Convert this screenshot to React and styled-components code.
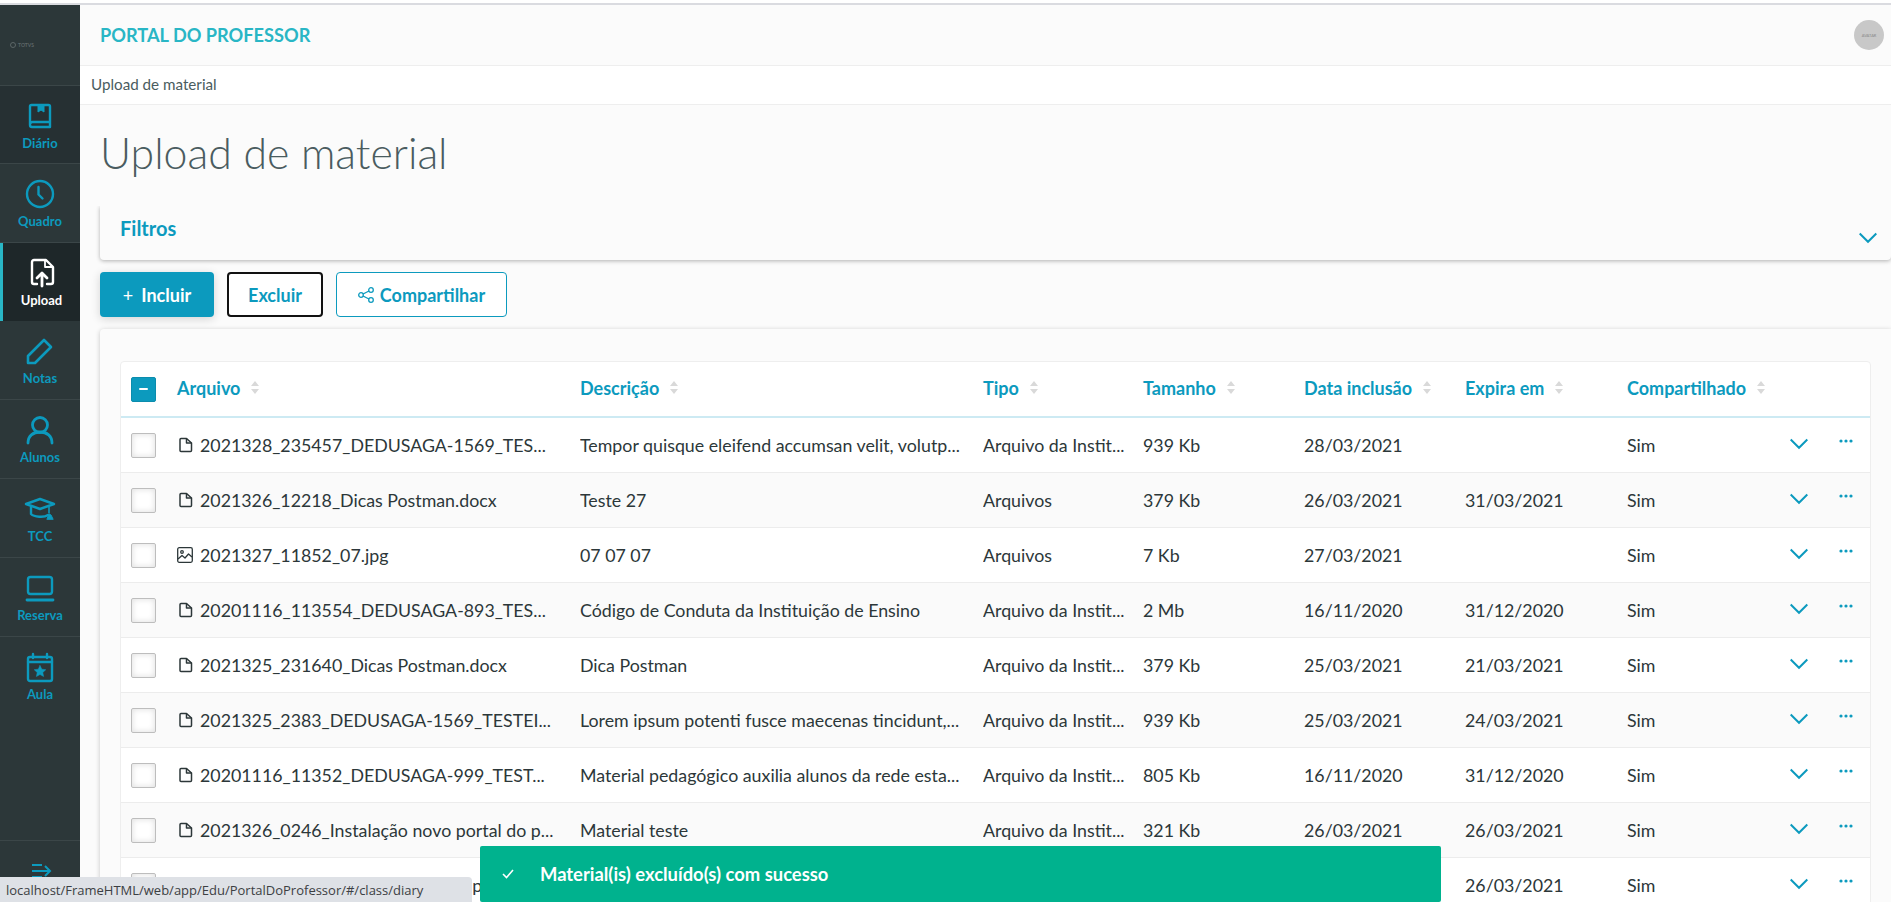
import React from "react";
import styled, { createGlobalStyle } from "styled-components";

const FONT = `"Lato", "Open Sans", sans-serif`;
const TEAL = "#0c9abe";

const GlobalStyle = createGlobalStyle`
  html, body {
    margin: 0;
    height: 100%;
    overflow: hidden;
    background: #fbfbfb;
    font-family: ${FONT};
  }
  * { box-sizing: border-box; }
`;

const Page = styled.div`
  height: 902px;
  display: flex;
  flex-direction: column;
  overflow: hidden;
`;

const TopEdge = styled.div`
  height: 5px;
  flex: none;
  background: #fff;
  border-bottom: 2px solid #dadbe0;
`;

const Shell = styled.div`
  flex: 1;
  min-height: 0;
  display: flex;
`;

const Sidebar = styled.nav`
  width: 80px;
  flex: none;
  background: #2c3739;
  display: flex;
  flex-direction: column;
`;

const LogoBox = styled.div`
  height: 81px;
  flex: none;
  padding: 0 0 0 10px;
  display: flex;
  align-items: center;
  gap: 2px;
  color: #5d6668;
  font-size: 5px;
  font-weight: 700;
  border-bottom: 1px solid #3b4648;
`;

const NavItem = styled.div`
  height: ${(p) => (p.$short ? 78 : 79)}px;
  flex: none;
  display: flex;
  flex-direction: column;
  align-items: center;
  justify-content: flex-start;
  padding-top: 14px;
  gap: 3px;
  font-size: 13px;
  font-weight: 700;
  color: ${(p) => (p.$active ? "#fff" : TEAL)};
  background: ${(p) => (p.$active ? "#1e2729" : p.$dark ? "#263033" : "transparent")};
  border-left: ${(p) => (p.$active ? "3px solid #29b6c5" : "0")};
  border-bottom: ${(p) => (p.$active || p.$last ? "0" : "1px solid #3b4648")};
`;

const NavIcon = styled.svg`
  width: 32px;
  height: 32px;
  fill: none;
  stroke: currentColor;
  stroke-width: 2.4;
  stroke-linecap: round;
  stroke-linejoin: round;
`;

const SidebarSpacer = styled.div`
  flex: 1;
  border-bottom: 1px solid #3b4648;
`;

const SidebarFoot = styled.div`
  height: 61px;
  flex: none;
  padding: 22px 0 0 32px;
  color: ${TEAL};
`;

const Main = styled.main`
  flex: 1;
  min-width: 0;
  display: flex;
  flex-direction: column;
`;

const Header = styled.header`
  height: 60px;
  flex: none;
  display: flex;
  align-items: center;
  justify-content: space-between;
  padding: 0 7px 0 20px;
  background: #fbfbfb;
`;

const PortalTitle = styled.div`
  font-size: 18.2px;
  font-weight: 700;
  color: #29b6c5;
  text-transform: uppercase;
`;

const Avatar = styled.div`
  width: 30px;
  height: 30px;
  border-radius: 50%;
  background: #c8c8c8;
  color: #8a8a8a;
  font-size: 4px;
  display: flex;
  align-items: center;
  justify-content: center;
`;

const Breadcrumb = styled.div`
  height: 40px;
  flex: none;
  padding: 0 0 2px 11px;
  display: flex;
  align-items: center;
  background: #fff;
  border-top: 1px solid #eee;
  border-bottom: 1px solid #eee;
  font-size: 15.2px;
  color: #4a5c60;
`;

const Content = styled.div`
  flex: 1;
  min-height: 0;
  padding-left: 20px;
  display: flex;
  flex-direction: column;
`;

const PageTitle = styled.h1`
  margin: 0;
  height: 101px;
  padding: 20px 0 0 0;
  font-size: 42.8px;
  line-height: 56px;
  font-weight: 300;
  color: #4a5c60;
`;

const FilterCard = styled.section`
  height: 54px;
  flex: none;
  position: relative;
  display: flex;
  padding: 10px 20px 0;
  font-size: 20px;
  font-weight: 700;
  color: ${TEAL};
  background: #fbfbfb;
  border-radius: 0 0 4px 4px;
  box-shadow: 0 1px 4px rgba(0, 0, 0, 0.3);
  clip-path: inset(0 -8px -8px -8px);
`;

const FilterChevron = styled.span`
  position: absolute;
  right: 14px;
  bottom: 13px;
  display: flex;
`;

const Toolbar = styled.div`
  height: 45px;
  flex: none;
  margin: 12px 0;
  display: flex;
  gap: 13px;
`;

const Button = styled.button`
  height: 45px;
  width: ${(p) => p.$width}px;
  padding: 0;
  display: flex;
  align-items: center;
  justify-content: center;
  gap: 6px;
  font-family: ${FONT};
  font-size: 18px;
  font-weight: 700;
  border-radius: 4px;
  color: ${(p) => (p.$primary ? "#fff" : TEAL)};
  background: ${(p) => (p.$primary ? TEAL : "#fff")};
  border: ${(p) =>
    p.$primary ? "0" : p.$focus ? "2px solid #111" : `1px solid ${TEAL}`};
  box-shadow: ${(p) => (p.$primary ? "0 2px 10px rgba(0,0,0,.16)" : "none")};
`;

const PlusMark = styled.span`
  font-weight: 400;
  margin-right: 2px;
`;

const TableCard = styled.section`
  flex: 1;
  min-height: 0;
  padding: 32px 20px 0;
  background: #fbfbfb;
  border-radius: 4px 0 0 0;
  box-shadow: 0 1px 5px rgba(0, 0, 0, 0.22);
  overflow: hidden;
`;

const Table = styled.div`
  background: #fff;
  border: 1px solid #eee;
  border-radius: 4px 4px 0 0;
`;

const COLUMNS = "56px 403px 403px 160px 161px 161px 162px 163px 49px 1fr";

const HeadRow = styled.div`
  height: 56px;
  display: grid;
  grid-template-columns: ${COLUMNS};
  align-items: center;
  border-bottom: 2px solid #cdeaf3;
`;

const Row = styled.div`
  height: 55px;
  display: grid;
  grid-template-columns: ${COLUMNS};
  align-items: center;
  background: ${(p) => (p.$even ? "#fafafa" : "#fff")};
  border-bottom: 1px solid #ececec;
  font-size: 17.8px;
  color: #2c3739;
`;

const HeadCell = styled.div`
  display: flex;
  align-items: center;
  gap: 11px;
  padding-bottom: 3px;
  font-size: 18px;
  font-weight: 700;
  color: ${TEAL};
`;

const Cell = styled.div`
  white-space: nowrap;
  overflow: hidden;
`;

const FileCell = styled(Cell)`
  display: flex;
  align-items: center;
  gap: 7px;
`;

const CheckCell = styled.div`
  padding-left: 10px;
  display: flex;
`;

const CheckBox = styled.span`
  width: 25px;
  height: 25px;
  display: flex;
  align-items: center;
  justify-content: center;
  border-radius: 2px;
  border: 1px solid ${(p) => (p.$on ? "#0b8cad" : "#bdbdbd")};
  background: ${(p) => (p.$on ? TEAL : "#fff")};
  box-shadow: ${(p) => (p.$on ? "none" : "inset 0 0 6px rgba(0,0,0,.14)")};
`;

const Dash = styled.span`
  width: 9px;
  height: 2px;
  border-radius: 1px;
  background: #fff;
`;

const ActionCell = styled.div`
  display: flex;
  color: ${TEAL};
  padding-bottom: ${(p) => (p.$dots ? 8 : 3)}px;
`;

const Toast = styled.div`
  position: fixed;
  left: 480px;
  bottom: 0;
  width: 961px;
  height: 56px;
  display: flex;
  align-items: center;
  gap: 26px;
  padding-left: 22px;
  background: #00b28e;
  border-radius: 2px;
  color: #fff;
  font-size: 18.4px;
  font-weight: 700;
`;

const StatusBubble = styled.div`
  position: fixed;
  left: 0;
  bottom: 0;
  width: 472px;
  height: 25px;
  padding-left: 6px;
  display: flex;
  align-items: center;
  background: #dee1e6;
  border-radius: 0 4px 0 0;
  font-family: "Open Sans", sans-serif;
  font-size: 13px;
  color: #3c4043;
  white-space: nowrap;
`;

const BookIcon = () => (
  <NavIcon viewBox="0 0 32 32">
    <path d="M6 25V6.500A1.500 1.500 0 0 1 7.500 5h17a1.500 1.500 0 0 1 1.500 1.500V27H8a2 2 0 0 1-2-2Zm0 0a2.500 2.500 0 0 1 2.500-3H26" />
    <path d="M14 5v7l3-2 3 2V5" fill="currentColor" strokeWidth="1" />
  </NavIcon>
);

const ClockIcon = () => (
  <NavIcon viewBox="0 0 32 32">
    <circle cx="16" cy="16" r="13" />
    <path d="M14.500 9v7.500l4 4" />
  </NavIcon>
);

const UploadIcon = () => (
  <NavIcon viewBox="0 0 32 32">
    <path d="M11 27H8a2 2 0 0 1-2-2V5a2 2 0 0 1 2-2h12l7 7v15a2 2 0 0 1-2 2h-4" />
    <path d="M19 4v6h7" strokeWidth="1.800" />
    <path d="M16 29V17M11 21l5-5 5 5" strokeWidth="2.800" />
  </NavIcon>
);

const PencilIcon = () => (
  <NavIcon viewBox="0 0 32 32">
    <path d="M4 28v-7L20 5l7 7-16 16Z" strokeWidth="2.600" />
  </NavIcon>
);

const UserIcon = () => (
  <NavIcon viewBox="0 0 32 32">
    <circle cx="16" cy="11" r="7.500" strokeWidth="2.800" />
    <path d="M4 29c0-7 5-11 12-11s12 4 12 11" strokeWidth="2.800" />
  </NavIcon>
);

const CapIcon = () => (
  <NavIcon viewBox="0 0 32 32">
    <path d="M2 11l14-5 14 5-14 5Z" />
    <path d="M7 14v7c3 3 13 4 17 1" />
    <path d="M25 14v6" strokeWidth="1.600" />
    <path d="M23 26l2-5 2 1 2 4Z" fill="currentColor" strokeWidth="1" />
  </NavIcon>
);

const LaptopIcon = () => (
  <NavIcon viewBox="0 0 32 32">
    <rect x="4" y="5" width="24" height="17" rx="2.500" />
    <path d="M3 28h26" strokeWidth="2.800" />
  </NavIcon>
);

const CalendarIcon = () => (
  <NavIcon viewBox="0 0 32 32">
    <rect x="4" y="6" width="24" height="24" rx="2" />
    <path d="M4 11h24M9 3v4M23 3v4" />
    <path
      d="M16 14.500l1.800 3.700 4 .5-3 2.800.8 4-3.600-2-3.600 2 .8-4-3-2.800 4-.5Z"
      fill="currentColor"
      strokeWidth="0.500"
    />
  </NavIcon>
);

const Chevron = () => (
  <svg width="18" height="18" viewBox="0 0 18 18" fill="none">
    <path d="M.7 4.500L9 12.800l8.300-8.300" stroke={TEAL} strokeWidth="2" />
  </svg>
);

const Dots = () => (
  <svg width="14" height="4" viewBox="0 0 14 4" fill={TEAL}>
    <circle cx="2" cy="2" r="1.600" />
    <circle cx="7" cy="2" r="1.600" />
    <circle cx="12" cy="2" r="1.600" />
  </svg>
);

const SortIcon = () => (
  <svg width="8" height="13" viewBox="0 0 8 13" fill="#d9d9d9">
    <path d="M4 0l4 5H0ZM4 13l4-5H0Z" />
  </svg>
);

const FileIcon = () => (
  <svg width="16" height="16" viewBox="0 0 16 16" fill="none" stroke="#2c3739" strokeWidth="1.500" strokeLinejoin="round">
    <path d="M3 2.500A1 1 0 0 1 4 1.500h5.500L14.500 6v7.500a1 1 0 0 1-1 1H4a1 1 0 0 1-1-1Z" />
    <path d="M9.500 1.500V6h5" />
  </svg>
);

const ImageIcon = () => (
  <svg width="16" height="16" viewBox="0 0 16 16" fill="none" stroke="#2c3739" strokeWidth="1.300" strokeLinejoin="round">
    <rect x="0.700" y="0.700" width="14.600" height="14.600" rx="1.500" />
    <circle cx="5" cy="5" r="1.300" />
    <path d="M1 12l4-3.500 3 2.500 3.500-4L15 10" />
  </svg>
);

const ShareIcon = () => (
  <svg width="16" height="16" viewBox="0 0 16 16" fill="none" stroke={TEAL} strokeWidth="1.300">
    <circle cx="3" cy="8" r="2.300" />
    <circle cx="13" cy="3" r="2.300" />
    <circle cx="13" cy="13" r="2.300" />
    <path d="M5 7l6-3M5 9l6 3" />
  </svg>
);

const navItems = [
  { label: "Diário", Icon: BookIcon, dark: true, short: true },
  { label: "Quadro", Icon: ClockIcon },
  { label: "Upload", Icon: UploadIcon, active: true, short: true },
  { label: "Notas", Icon: PencilIcon },
  { label: "Alunos", Icon: UserIcon },
  { label: "TCC", Icon: CapIcon },
  { label: "Reserva", Icon: LaptopIcon },
  { label: "Aula", Icon: CalendarIcon, last: true },
];

const columns = ["Arquivo", "Descrição", "Tipo", "Tamanho", "Data inclusão", "Expira em", "Compartilhado"];

const INST = "Arquivo da Instit...";

const rows = [
  ["2021328_235457_DEDUSAGA-1569_TES...", "Tempor quisque eleifend accumsan velit, volutp...", INST, "939 Kb", "28/03/2021", ""],
  ["2021326_12218_Dicas Postman.docx", "Teste 27", "Arquivos", "379 Kb", "26/03/2021", "31/03/2021"],
  ["2021327_11852_07.jpg", "07 07 07", "Arquivos", "7 Kb", "27/03/2021", "", true],
  ["20201116_113554_DEDUSAGA-893_TES...", "Código de Conduta da Instituição de Ensino", INST, "2 Mb", "16/11/2020", "31/12/2020"],
  ["2021325_231640_Dicas Postman.docx", "Dica Postman", INST, "379 Kb", "25/03/2021", "21/03/2021"],
  ["2021325_2383_DEDUSAGA-1569_TESTEI...", "Lorem ipsum potenti fusce maecenas tincidunt,...", INST, "939 Kb", "25/03/2021", "24/03/2021"],
  ["20201116_11352_DEDUSAGA-999_TEST...", "Material pedagógico auxilia alunos da rede esta...", INST, "805 Kb", "16/11/2020", "31/12/2020"],
  ["2021326_0246_Instalação novo portal do p...", "Material teste", INST, "321 Kb", "26/03/2021", "26/03/2021"],
  ["2021326_0246_Instalação novos ap...", "Material teste", INST, "321 Kb", "26/03/2021", "26/03/2021"],
];

export default function App() {
  return (
    <Page>
      <GlobalStyle />
      <TopEdge />
      <Shell>
        <Sidebar>
          <LogoBox>
            <svg width="6" height="6" viewBox="0 0 6 6" fill="none" stroke="#5d6668">
              <circle cx="3" cy="3" r="2.500" />
            </svg>
            TOTVS
          </LogoBox>
          {navItems.map(({ label, Icon, active, dark, short, last }) => (
            <NavItem key={label} $active={active} $dark={dark} $short={short} $last={last}>
              <Icon />
              {label}
            </NavItem>
          ))}
          <SidebarSpacer />
          <SidebarFoot>
            <svg width="20" height="16" viewBox="0 0 20 16" fill="none" stroke={TEAL} strokeWidth="2">
              <path d="M0 2h10M0 8h17M13 3l5 5-5 5M0 14h10" />
            </svg>
          </SidebarFoot>
        </Sidebar>
        <Main>
          <Header>
            <PortalTitle>Portal do Professor</PortalTitle>
            <Avatar>AVATAR</Avatar>
          </Header>
          <Breadcrumb>Upload de material</Breadcrumb>
          <Content>
            <PageTitle>Upload de material</PageTitle>
            <FilterCard>
              Filtros
              <FilterChevron>
                <Chevron />
              </FilterChevron>
            </FilterCard>
            <Toolbar>
              <Button $primary $width={114}>
                <PlusMark>+</PlusMark> Incluir
              </Button>
              <Button $focus $width={96}>Excluir</Button>
              <Button $width={171}>
                <ShareIcon /> Compartilhar
              </Button>
            </Toolbar>
            <TableCard>
              <Table>
                <HeadRow>
                  <CheckCell>
                    <CheckBox $on>
                      <Dash />
                    </CheckBox>
                  </CheckCell>
                  {columns.map((name) => (
                    <HeadCell key={name}>
                      {name}
                      <SortIcon />
                    </HeadCell>
                  ))}
                </HeadRow>
                {rows.map(([file, description, type, size, added, expires, isImage], i) => (
                  <Row key={i} $even={i % 2 === 1}>
                    <CheckCell>
                      <CheckBox />
                    </CheckCell>
                    <FileCell>
                      {isImage ? <ImageIcon /> : <FileIcon />}
                      {file}
                    </FileCell>
                    <Cell>{description}</Cell>
                    <Cell>{type}</Cell>
                    <Cell>{size}</Cell>
                    <Cell>{added}</Cell>
                    <Cell>{expires}</Cell>
                    <Cell>Sim</Cell>
                    <ActionCell>
                      <Chevron />
                    </ActionCell>
                    <ActionCell $dots>
                      <Dots />
                    </ActionCell>
                  </Row>
                ))}
              </Table>
            </TableCard>
          </Content>
        </Main>
      </Shell>
      <StatusBubble>localhost/FrameHTML/web/app/Edu/PortalDoProfessor/#/class/diary</StatusBubble>
      <Toast>
        <svg width="12" height="10" viewBox="0 0 12 10" fill="none" stroke="#fff" strokeWidth="1.600">
          <path d="M1 5l3.500 3.500L11 1" />
        </svg>
        Material(is) excluído(s) com sucesso
      </Toast>
    </Page>
  );
}
